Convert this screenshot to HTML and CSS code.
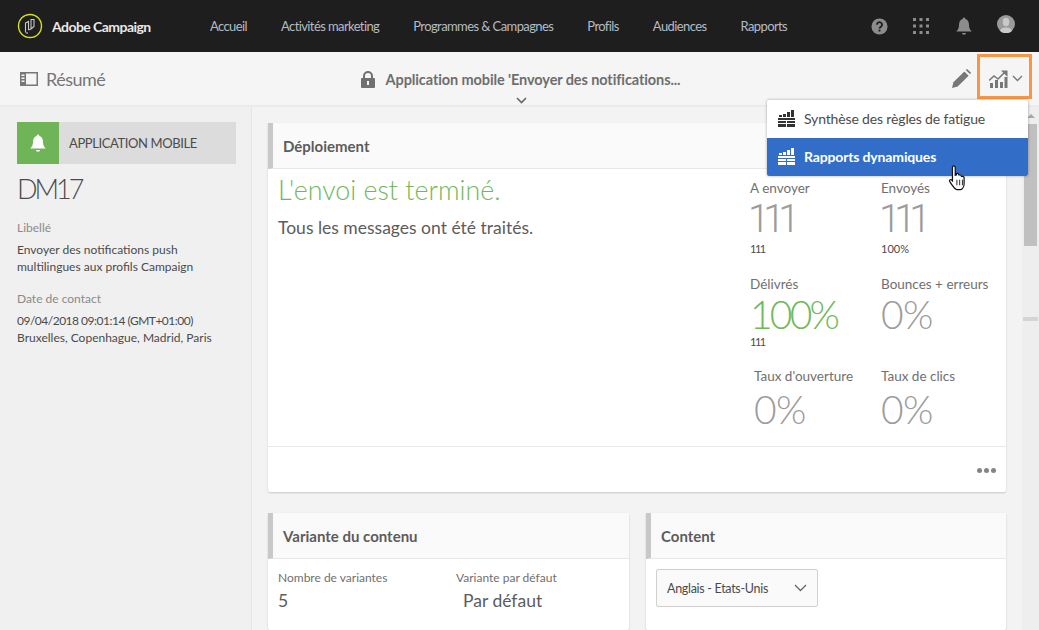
FILE: index.html

```html
<!DOCTYPE html>
<html lang="fr">
<head>
  <meta charset="UTF-8">
  <meta name="viewport" content="width=device-width, initial-scale=1.0">
  <title>Adobe Campaign</title>
  <link rel="stylesheet" href="styles.css">
</head>
<body>
  <header class="topbar">
    <div class="brand">
      <svg class="brand-logo" width="26" height="26" viewBox="0 0 26 26" fill="none">
        <circle cx="13" cy="13" r="11.500" stroke="#d7e021" stroke-width="1.400"/>
        <path d="M8.500 19.500V10l3-1.500v8.500M11.500 17l2.500-1V6.500h3v7l-3 2.500M10 21v-2" stroke="#c9c9c9" stroke-width="1.100"/>
      </svg>
      <span class="brand-name">Adobe Campaign</span>
    </div>
    <nav class="nav">
      <a>Accueil</a>
      <a>Activités marketing</a>
      <a>Programmes &amp; Campagnes</a>
      <a>Profils</a>
      <a>Audiences</a>
      <a>Rapports</a>
    </nav>
    <div class="top-icons">
      <svg width="17" height="17" viewBox="0 0 18 18">
        <circle cx="9" cy="9" r="8.500" fill="#8c8c8c"/>
        <path d="M6.300 7a2.700 2.600 0 1 1 4.200 2.200C9.500 9.900 9 10.300 9 11.200" fill="none" stroke="#1e1e1e" stroke-width="2"/>
        <rect x="8" y="12.300" width="2" height="2" fill="#1e1e1e"/>
      </svg>
      <svg width="16" height="16" viewBox="0 0 16 16" fill="#8c8c8c">
        <rect width="3" height="3"/><rect x="6.500" width="3" height="3"/><rect x="13" width="3" height="3"/>
        <rect y="6.500" width="3" height="3"/><rect x="6.500" y="6.500" width="3" height="3"/><rect x="13" y="6.500" width="3" height="3"/>
        <rect y="13" width="3" height="3"/><rect x="6.500" y="13" width="3" height="3"/><rect x="13" y="13" width="3" height="3"/>
      </svg>
      <svg class="bell" width="16" height="19" viewBox="0 0 16 19" fill="#8c8c8c">
        <path d="M8 0.500a1.300 1.300 0 0 1 1.300 1.500C12 2.700 13 5 13 8c0 3 1 5 2.800 6.500H.2C2 13 3 11 3 8c0-3 1-5.300 3.700-6A1.300 1.300 0 0 1 8 .5z"/>
        <path d="M6 16h4a2 1.800 0 0 1-4 0z"/>
      </svg>
      <svg class="avatar" width="18" height="18" viewBox="0 0 18 18">
        <circle cx="9" cy="9" r="9" fill="#9a9a9a"/>
        <ellipse cx="9" cy="7" rx="3.300" ry="4.200" fill="#c9c9c9"/>
        <path d="M3 16c1-3 3.500-3.500 6-3.500s5 .5 6 3.500a9 9 0 0 1-12 0z" fill="#c9c9c9"/>
      </svg>
    </div>
  </header>

  <div class="subbar">
    <div class="sub-left">
      <svg width="18" height="14" viewBox="0 0 18 14">
        <path d="M0 0h18v14H0z" fill="#777"/>
        <path d="M6 1.500h10.500v11H6z" fill="#f5f5f5"/>
        <path d="M1.500 2.500h3v1.500h-3zM1.500 5.500h3V7h-3zM1.500 8.500h3V10h-3z" fill="#f5f5f5"/>
      </svg>
      <span class="sub-title">Résumé</span>
    </div>
    <div class="sub-center">
      <svg width="14" height="17" viewBox="0 0 14 17">
        <path d="M3 7V5a4 4 0 0 1 8 0v2" fill="none" stroke="#707070" stroke-width="2"/>
        <rect y="7" width="14" height="10" rx="1" fill="#707070"/>
        <rect x="6" y="10" width="2" height="4" fill="#f5f5f5"/>
      </svg>
      <span class="sub-name">Application mobile 'Envoyer des notifications...</span>
      <svg class="sub-caret" width="11" height="7" viewBox="0 0 11 7">
        <path d="M1 1l4.500 4.500L10 1" fill="none" stroke="#666" stroke-width="1.600"/>
      </svg>
    </div>
    <div class="sub-right">
      <svg width="19" height="19" viewBox="0 0 20 20">
        <path d="M0 20l1.500-6L13 2.500l4.500 4.500L6 18.500z" fill="#777"/>
        <path d="M14.500 1L16 0l4 4-1 1.500z" fill="#777"/>
      </svg>
      <div class="report-btn">
        <svg width="19" height="18" viewBox="0 0 19 18" fill="#777">
          <rect x="1" y="13" width="3" height="5"/><rect x="6" y="10" width="3" height="8"/><rect x="11" y="12" width="3" height="6"/><rect x="15.500" y="7" width="3" height="11"/>
          <path d="M0 10.500l5-4.500 4 3 6-6" fill="none" stroke="#777" stroke-width="1.500"/>
          <path d="M12 .5h6.500V7z"/>
        </svg>
        <svg width="11" height="7" viewBox="0 0 11 7">
          <path d="M1 1l4.500 4.500L10 1" fill="none" stroke="#777" stroke-width="1.400"/>
        </svg>
      </div>
    </div>
  </div>

  <div class="body-row">
    <aside class="sidebar">
      <div class="type-tag">
        <span class="type-icon">
          <svg width="16" height="19" viewBox="0 0 16 19" fill="#fff">
            <path d="M8 0.500a1.300 1.300 0 0 1 1.300 1.500C12 2.700 13 5 13 8c0 3 1 5 2.800 6.500H.2C2 13 3 11 3 8c0-3 1-5.300 3.700-6A1.300 1.300 0 0 1 8 .5z"/>
            <path d="M6 16h4a2 1.800 0 0 1-4 0z"/>
          </svg>
        </span>
        <span class="type-label">APPLICATION MOBILE</span>
      </div>
      <h1 class="code">DM17</h1>
      <div class="field-label">Libellé</div>
      <p class="field-value">Envoyer des notifications push<br>multilingues aux profils Campaign</p>
      <div class="field-label">Date de contact</div>
      <p class="field-value"><span class="date">09/04/2018 09:01:14 (GMT+01:00)</span><br>Bruxelles, Copenhague, Madrid, Paris</p>
    </aside>

    <main class="content">
      <section class="card">
        <h2 class="card-head">Déploiement</h2>
        <div class="deploy-body">
          <div class="deploy-status">
            <div class="status-title">L'envoi est terminé.</div>
            <div class="status-text">Tous les messages ont été traités.</div>
          </div>
          <div class="metrics">
            <div class="metric">
              <div class="metric-label">A envoyer</div>
              <div class="metric-value tight">111</div>
              <div class="metric-sub tight">111</div>
            </div>
            <div class="metric">
              <div class="metric-label">Envoyés</div>
              <div class="metric-value tight">111</div>
              <div class="metric-sub">100%</div>
            </div>
            <div class="metric">
              <div class="metric-label">Délivrés</div>
              <div class="metric-value green">100%</div>
              <div class="metric-sub tight">111</div>
            </div>
            <div class="metric">
              <div class="metric-label">Bounces + erreurs</div>
              <div class="metric-value">0%</div>
            </div>
            <div class="metric last shifted">
              <div class="metric-label">Taux d'ouverture</div>
              <div class="metric-value">0%</div>
            </div>
            <div class="metric last">
              <div class="metric-label">Taux de clics</div>
              <div class="metric-value">0%</div>
            </div>
          </div>
        </div>
        <div class="card-foot"><span class="dots"><i></i><i></i><i></i></span></div>
      </section>

      <div class="card-row">
        <section class="card">
          <h2 class="card-head">Variante du contenu</h2>
          <div class="variant-body">
            <div class="variant-col">
              <div class="variant-label">Nombre de variantes</div>
              <div class="variant-value">5</div>
            </div>
            <div class="variant-col">
              <div class="variant-label">Variante par défaut</div>
              <div class="variant-value indent">Par défaut</div>
            </div>
          </div>
        </section>
        <section class="card">
          <h2 class="card-head">Content</h2>
          <div class="content-body">
            <div class="select">
              <span>Anglais - Etats-Unis</span>
              <svg width="13" height="8" viewBox="0 0 13 8">
                <path d="M1 1l5.500 5.500L12 1" fill="none" stroke="#666" stroke-width="1.300"/>
              </svg>
            </div>
          </div>
        </section>
      </div>
    </main>

    <div class="scrollbar">
      <div class="scroll-arrow"></div>
      <div class="scroll-thumb"></div>
      <div class="scroll-mark"></div>
    </div>
  </div>

  <div class="highlight"></div>

  <div class="menu">
    <div class="menu-item">
      <svg class="menu-icon" width="17" height="17" viewBox="0 0 17 17" fill="#333">
        <path d="M0 8h17v9H0z"/>
        <path d="M1 5h3v2H1zM5 4h3v3H5zM9 2h3v5H9zM13 0h3v7h-3z"/>
        <path d="M0 10h17v1H0zM0 13h17v1H0zM8 10h1v7H8z" fill="#fff"/>
      </svg>
      <span>Synthèse des règles de fatigue</span>
    </div>
    <div class="menu-item active">
      <svg class="menu-icon" width="17" height="17" viewBox="0 0 17 17" fill="#fff">
        <path d="M0 8h17v9H0z"/>
        <path d="M1 5h3v2H1zM5 4h3v3H5zM9 2h3v5H9zM13 0h3v7h-3z"/>
        <path d="M0 10h17v1H0zM0 13h17v1H0zM8 10h1v7H8z" fill="#326ec8"/>
      </svg>
      <span>Rapports dynamiques</span>
    </div>
  </div>

  <svg class="cursor" width="20" height="27" viewBox="0 0 18 24">
    <path d="M5 1.500c1 0 1.500.7 1.500 1.500v7l1-.3V8.500c1.200-.6 2 0 2 1l.5.300c1-.5 2 0 2 1l.5.300c1-.3 2 .2 2 1.200v5.200c0 2.500-1.500 5-3 5.500H8c-1.500-.5-5-5-6.500-7.500-.5-1 .5-2 1.500-1.500l1 1V3c0-1 .2-1.500 1-1.500z" fill="#fff" stroke="#111" stroke-width="1.100"/>
    <path d="M8 14v5M10.500 14v5M13 14v5" stroke="#111" stroke-width=".8"/>
  </svg>
</body>
</html>
```

FILE: styles.css

```css
* {
  box-sizing: border-box;
}
html, body {
  height: 100%;
}
body {
  margin: 0;
  font-family: Lato, "Open Sans", sans-serif;
  color: #4b4b4b;
  background: #f0f0f0;
  display: flex;
  flex-direction: column;
  overflow: hidden;
  position: relative;
}

/* top bar */
.topbar {
  height: 52px;
  flex: none;
  background: #1e1e1e;
  display: flex;
  align-items: center;
  padding: 0 24px 0 17px;
}
.brand {
  display: flex;
  align-items: center;
  gap: 9px;
  width: 193px;
}
.brand-name {
  color: #e8e8e8;
  font-size: 14px;
  font-weight: 700;
  letter-spacing: -0.55px;
  white-space: nowrap;
}
.nav {
  display: flex;
  gap: 34px;
  flex: 1;
}
.nav a {
  color: #b4bcc4;
  font-size: 13px;
  letter-spacing: -0.6px;
  white-space: nowrap;
}
.top-icons {
  display: flex;
  align-items: center;
  gap: 25px;
}
.bell {
  margin-left: 2px;
}
.avatar {
  margin-top: -4px;
}

/* sub bar */
.subbar {
  height: 55px;
  flex: none;
  background: #f5f5f5;
  border-bottom: 2px solid #ebebeb;
  display: grid;
  grid-template-columns: 1fr auto 1fr;
  padding: 0 16px 0 20px;
}
.sub-left {
  display: flex;
  align-items: center;
  gap: 8px;
}
.sub-title {
  font-size: 18px;
  letter-spacing: -0.5px;
  color: #767676;
}
.sub-center {
  display: grid;
  grid-template-columns: auto auto;
  column-gap: 11px;
  align-items: center;
  justify-items: center;
  padding: 18px 2px 0 0;
}
.sub-name {
  font-size: 14.500px;
  font-weight: 700;
  letter-spacing: -0.1px;
  color: #6e6e6e;
  white-space: nowrap;
}
.sub-caret {
  grid-column: 1 / 3;
  margin: 8px 0 0 2px;
}
.sub-right {
  display: flex;
  justify-content: flex-end;
  align-items: center;
  gap: 18px;
}
.report-btn {
  display: flex;
  align-items: center;
  gap: 4px;
}

/* main area */
.body-row {
  flex: 1;
  display: flex;
  min-height: 0;
}
.sidebar {
  width: 252px;
  flex: none;
  background: #f0f0f0;
  border-right: 1px solid #e6e6e6;
  padding: 15px 15px 0 17px;
}
.type-tag {
  display: flex;
  align-items: center;
  height: 42px;
  background: #dcdcdc;
}
.type-icon {
  width: 42px;
  height: 42px;
  background: #6fb558;
  display: flex;
  align-items: center;
  justify-content: center;
}
.type-label {
  margin-left: 10px;
  font-size: 13px;
  letter-spacing: -0.4px;
  color: #4b4b4b;
}
.code {
  margin: 8px 0 14px;
  font-size: 27px;
  font-weight: 300;
  letter-spacing: -3px;
  line-height: 34px;
  color: #4b4b4b;
}
.field-label {
  font-size: 12px;
  line-height: 16px;
  color: #8a8a8a;
}
.field-value {
  margin: 5px 0 16px;
  font-size: 12px;
  line-height: 17px;
  color: #4b4b4b;
}
.date {
  letter-spacing: -0.5px;
}
.content {
  flex: 1;
  min-width: 0;
  padding: 16px 16px 0;
  display: flex;
  flex-direction: column;
  gap: 21px;
  background: #f3f3f3;
}
.card {
  background: #fff;
  border-radius: 2px;
  box-shadow: 0 1px 2px rgba(0, 0, 0, 0.18);
}
.card-head {
  margin: 0;
  height: 46px;
  padding-left: 10px;
  border-left: 5px solid #c8c8c8;
  border-bottom: 1px solid #e8e8e8;
  background: #fafafa;
  font-size: 15px;
  font-weight: 700;
  line-height: 46px;
  color: #5c5c5c;
}
.deploy-body {
  display: flex;
  height: 277px;
}
.deploy-status {
  flex: 1;
  padding-left: 10px;
}
.status-title {
  font-size: 26.800px;
  font-weight: 300;
  line-height: 30px;
  margin-top: 6px;
  color: #72b85a;
}
.status-text {
  font-size: 17.500px;
  line-height: 24px;
  margin-top: 11px;
  color: #5c5c5c;
}
.metrics {
  width: 256px;
  display: grid;
  grid-template-columns: 131px 125px;
  grid-template-rows: 96px 92px 1fr;
  margin-top: 11px;
}
.metric.shifted {
  padding-left: 4px;
}
.metric-label {
  font-size: 13.500px;
  line-height: 16px;
  color: #707070;
  white-space: nowrap;
}
.metric-value {
  font-size: 39px;
  font-weight: 300;
  letter-spacing: -0.5px;
  line-height: 44px;
  color: #9c9c9c;
}
.metric-value.tight {
  margin: 0 0 -1px -2px;
  font-family: Roboto, sans-serif;
  line-height: 46px;
  letter-spacing: -6.500px;
}
.metric-value.green {
  margin-bottom: -2px;
  letter-spacing: -2.800px;
  color: #72b85a;
}
.metric.last .metric-value {
  margin-top: 3px;
}
.metric-sub {
  font-size: 11px;
  line-height: 14px;
  margin-top: 1px;
  color: #4b4b4b;
}
.metric-sub.tight {
  letter-spacing: -1.500px;
}
.card-foot {
  height: 46px;
  border-top: 1px solid #e8e8e8;
  display: flex;
  align-items: center;
  justify-content: flex-end;
  padding-right: 10px;
}
.dots {
  display: flex;
  gap: 2px;
  margin-top: 1px;
}
.dots i {
  width: 5px;
  height: 5px;
  border-radius: 50%;
  background: #858585;
}
.card-row {
  display: grid;
  grid-template-columns: 361px 360px;
  gap: 17px;
  height: 200px;
}
.variant-body {
  display: grid;
  grid-template-columns: 178px 1fr;
  padding: 11px 10px 0;
}
.variant-label {
  font-size: 12px;
  line-height: 16px;
  color: #707070;
}
.variant-value {
  font-size: 17.500px;
  line-height: 24px;
  margin-top: 3px;
  color: #5c5c5c;
}
.variant-value.indent {
  padding-left: 7px;
}
.content-body {
  padding: 10px;
}
.select {
  width: 162px;
  height: 38px;
  background: #fafafa;
  border: 1px solid #d0d0d0;
  border-radius: 2px;
  display: flex;
  align-items: center;
  justify-content: space-between;
  padding: 0 10px;
  font-size: 12.500px;
  letter-spacing: -0.3px;
  color: #4b4b4b;
}
.scrollbar {
  width: 17px;
  flex: none;
  background: #eeeeee;
  padding: 7px 2px 0 2px;
}
.scroll-arrow {
  width: 0;
  height: 0;
  margin: 0 auto 6px;
  border-left: 4px solid transparent;
  border-right: 4px solid transparent;
  border-bottom: 4px solid #a8a8a8;
}
.scroll-thumb {
  height: 122px;
  background: #c0c0c0;
}
.scroll-mark {
  height: 4px;
  margin: 71px -1px 0;
  background: #d4d4d4;
}

/* overlays */
.highlight {
  position: absolute;
  left: 977px;
  top: 54px;
  width: 55px;
  height: 45px;
  border: 3px solid #f79646;
}
.menu {
  position: absolute;
  left: 767px;
  top: 100px;
  width: 261px;
  height: 76px;
  background: #fff;
  border-radius: 2px;
  box-shadow: 0 0 3px rgba(0, 0, 0, 0.35);
  overflow: hidden;
}
.menu-item {
  height: 38px;
  display: flex;
  align-items: center;
  gap: 9px;
  padding: 0 0 2px 11px;
  font-size: 14px;
  letter-spacing: -0.15px;
  color: #4b4b4b;
}
.menu-item.active {
  background: #326ec8;
  color: #fff;
  font-weight: 700;
}
.menu-icon {
  shape-rendering: crispEdges;
}
.cursor {
  position: absolute;
  left: 948px;
  top: 164px;
}
```
